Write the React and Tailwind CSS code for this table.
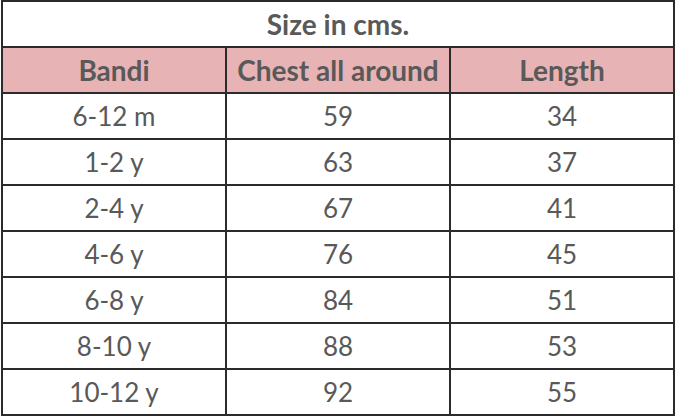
const ROWS = [
  ["6-12 m", "59", "34"],
  ["1-2 y", "63", "37"],
  ["2-4 y", "67", "41"],
  ["4-6 y", "76", "45"],
  ["6-8 y", "84", "51"],
  ["8-10 y", "88", "53"],
  ["10-12 y", "92", "55"],
];

export default function App() {
  return (
    <div className="w-[676px] h-[419px] bg-white pl-[1px]" style={{ fontFamily: "Lato, 'Open Sans', sans-serif" }}>
      <table className="w-[674px] border-collapse table-fixed text-[26px] text-[#595959]">
        <tbody>
          <tr className="h-[46px]">
            <td colSpan={3} className="border-2 border-[#2b2b2b] text-center font-bold text-[28px] p-0">
              Size in cms.
            </td>
          </tr>
          <tr className="h-[46px] bg-[#e8b3b4]">
            <td className="border-2 border-[#2b2b2b] text-center font-bold text-[28px] p-0">Bandi</td>
            <td className="border-2 border-[#2b2b2b] text-center font-bold text-[28px] p-0">Chest all around</td>
            <td className="border-2 border-[#2b2b2b] text-center font-bold text-[28px] p-0">Length</td>
          </tr>
          {ROWS.map((r) => (
            <tr key={r[0]} className="h-[46px]">
              {r.map((c, i) => (
                <td key={i} className="border-2 border-[#2b2b2b] text-center p-0">{c}</td>
              ))}
            </tr>
          ))}
        </tbody>
      </table>
    </div>
  );
}
